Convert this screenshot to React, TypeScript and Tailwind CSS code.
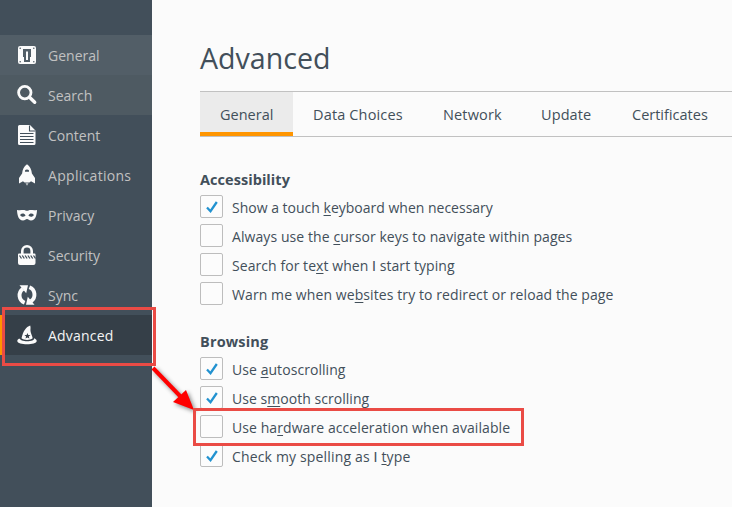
import { ReactNode } from "react";

const icons: Record<string, ReactNode> = {
  General: (
    <>
      <path fillRule="evenodd" d="M3 1h14a2 2 0 0 1 2 2v14a2 2 0 0 1-2 2H3a2 2 0 0 1-2-2V3a2 2 0 0 1 2-2ZM6 4v8h1v5h6v-5h1V4Z" />
      <path d="M9 6.500h2V15H9Z" />
      <g fill="#4f5c65">
        <circle cx="3.200" cy="3.200" r=".8" /><circle cx="16.800" cy="3.200" r=".8" />
        <circle cx="3.200" cy="16.800" r=".8" /><circle cx="16.800" cy="16.800" r=".8" />
      </g>
    </>
  ),
  Search: (
    <g fill="none" stroke="currentColor">
      <circle cx="7.800" cy="7.600" r="6.200" strokeWidth="2.800" />
      <path d="m12.500 12.300 5.200 5" strokeWidth="3.400" strokeLinecap="round" />
    </g>
  ),
  Content: (
    <>
      <path d="M2.500 0H13l5.500 5.500v13A1.500 1.500 0 0 1 17 20H2.500A1.500 1.500 0 0 1 1 18.500v-17A1.500 1.500 0 0 1 2.500 0Z" />
      <path d="M12.500.5V6h6M3 8.500h13.500M3 11.500h13.500M3 14.500h13.500M3 17.500h13.500" fill="none" stroke="#424f5a" strokeWidth="1.100" />
    </>
  ),
  Applications: (
    <>
      <path fillRule="evenodd" d="M10-.8C7 1.500 5.400 4.500 5.100 8.500L2 13v5.500l4-2.300c.7.600 1.400 1.300 2 1.300h4c.6 0 1.300-.7 2-1.300l4 2.300V13l-3.100-4.500C14.600 4.500 13 1.500 10-.8Zm0 5.300a2 2 0 0 1 2 2.300H8a2 2 0 0 1 2-2.300Z" />
      <path d="M8.500 18.300h3L10 20.800Z" opacity=".7" />
    </>
  ),
  Privacy: (
    <path fillRule="evenodd" d="M0 5c3.500.9 6-.5 8.500.4.800.4 2.200.4 3 0 2.500-.9 5 .5 8.500-.4-.2 5-1.500 10.500-6 10.500-2 0-2.700-1.500-4-1.500s-2 1.500-4 1.500C1.500 15.500.2 10 0 5Zm3 5c1.600 2.300 3.600 2.300 5.600.5C7 8 5 8 3 10Zm14 0c-2-2-4-2-5.600.5 2 1.800 4 1.800 5.600-.5Z" />
  ),
  Security: (
    <>
      <path d="M5.300 9V6a4.700 4.700 0 0 1 9.400 0v3" fill="none" stroke="currentColor" strokeWidth="2.600" />
      <path d="M2 8.500h15.500a1 1 0 0 1 1 1V18a2 2 0 0 1-2 2H3a2 2 0 0 1-2-2V9.500a1 1 0 0 1 1-1Z" />
      <path d="m2.500 10.500 2 3m.8-3 2 3m.8-3 2 3m.8-3 2 3m.8-3 2 3m.8-3 2 3" stroke="#424f5a" strokeWidth="1.300" />
    </>
  ),
  Sync: (
    <>
      <path d="M6 3.800A7.900 7.900 0 0 0 7.600 17.700M14 16.200A7.900 7.900 0 0 0 12.400 2.300" fill="none" stroke="currentColor" strokeWidth="3.900" />
      <path d="M2.500.3H11L9.200 8.200ZM17.500 19.700H9l1.800-7.900Z" />
    </>
  ),
  Advanced: (
    <>
      <path fillRule="evenodd" d="M13.200.5C9 2 6.300 5.800 4.500 13.300c2.800 2.300 8.200 2.300 11.200 0-.6-3-1.900-5-2.200-7.300-.2-2 .4-3.500-.3-5.500ZM10.400 8l.9 2 2.200.1-1.700 1.400.6 2.100-2-1.200-1.900 1.200.6-2.100-1.700-1.400 2.200-.1Z" />
      <path d="M3 13.300C1.300 14 .3 14.800.3 16c0 4.300 19.400 4.300 19.400 0 0-1.200-1-2-2.700-2.700 1.500 3.900-15 3.900-14 0Z" />
    </>
  ),
};

const nav = [
  ["General", "bg-[#525e67] pl-[17px] tracking-[0.02px]"],
  ["Search", "bg-[#4e5a62] pl-[17px]"],
  ["Content", "pl-[17px]"],
  ["Applications", "pl-[17px] tracking-[0.3px]"],
  ["Privacy", "pl-[17px]"],
  ["Security", "pl-[17px]"],
  ["Sync", "pl-[17px]"],
  ["Advanced", "bg-[#353f48] text-[#f4f4f4] border-l-2 border-[#ff9500] pl-[15px] tracking-[0.2px]"],
];

function Check({ on, children, className = "" }: { on?: boolean; children: ReactNode; className?: string }) {
  return (
    <label className="flex h-[29px] items-center gap-[9px]">
      <span className="flex size-[23px] shrink-0 items-center justify-center rounded-[2px] border border-[#bdbdbd] bg-[#fcfcfc]">
        {on && (
          <svg viewBox="0 0 12 12" className="size-3" fill="none" stroke="#2292d0" strokeWidth="2.300">
            <path d="m1 6.500 3.500 3.700L10.800 1" />
          </svg>
        )}
      </span>
      <span className={"whitespace-nowrap pt-[2px] " + className}>{children}</span>
    </label>
  );
}

const U = ({ children }: { children: ReactNode }) => <span className="underline decoration-1 underline-offset-2">{children}</span>;

const PlainI = () => <span className="font-['Lato',sans-serif]">I</span>;

export default function App() {
  return (
    <div className="relative flex h-[507px] w-[732px] overflow-hidden bg-[#fbfbfb] font-['Open_Sans',sans-serif] text-[14px] leading-5 text-[#424f5a]">
      <nav className="w-[152px] shrink-0 bg-[#424f5a] pt-[35px] text-[#c1c1c1]">
        {nav.map(([name, cls]) => (
          <div key={name} className={"flex h-10 items-center gap-[11px] " + cls}>
            <svg viewBox="0 0 20 20" className="size-5 shrink-0 overflow-visible text-[#fbfbfb]" fill="currentColor">{icons[name]}</svg>
            <span className="pt-px">{name}</span>
          </div>
        ))}
      </nav>
      <main className="min-w-0 flex-1 overflow-hidden pl-12 pt-[38px]">
        <h1 className="h-[53px] text-[28.6px] leading-10"><span>Advanced</span></h1>
        <div className="flex h-[46px] whitespace-nowrap border-y border-[#c1c1c1] text-[14.5px] leading-[45px]">
          <div className="w-[93px] border-b-4 border-[#ff9500] bg-[#ebebeb] pl-5"><span>General</span></div>
          <div className="w-[130px] pl-5 tracking-[0.15px]"><span>Data Choices</span></div>
          <div className="w-[98px] pl-5 tracking-[0.15px]"><span>Network</span></div>
          <div className="w-[90px] pl-5 tracking-[0.1px]"><span>Update</span></div>
          <div className="w-[121px] pl-[21px]"><span>Certificates</span></div>
        </div>
        <section className="pt-8">
          <h2 className="h-[23px] text-[14.5px] font-bold leading-[22px] tracking-[0.05px]"><span>Accessibility</span></h2>
          <Check on>Show a touch <U>k</U>eyboard when necessary</Check>
          <Check className="tracking-[0.08px]">Always use the <U>c</U>ursor keys to navigate within pages</Check>
          <Check className="tracking-[0.06px]">Search for te<U>x</U>t when <PlainI /> start typing</Check>
          <Check className="tracking-[0.09px]">Warn me when we<U>b</U>sites try to redirect or reload the page</Check>
        </section>
        <section className="pt-[23px]">
          <h2 className="h-[23px] text-[14.5px] font-bold leading-[22px] tracking-[0.15px]"><span>Browsing</span></h2>
          <Check on className="tracking-[0.06px]">Use <U>a</U>utoscrolling</Check>
          <Check on className="tracking-[0.04px]">Use s<U>m</U>ooth scrolling</Check>
          <Check className="tracking-[0.08px]">Use ha<U>r</U>dware acceleration when available</Check>
          <Check on className="tracking-[0.16px]">Check my spelling as <PlainI /> <U>t</U>ype</Check>
        </section>
      </main>
      <div className="absolute left-[2px] top-[307px] h-[59px] w-[154px] border-[3px] border-[#ea4b45]" />
      <svg className="absolute left-[145px] top-[360px] h-[60px] w-[60px] drop-shadow-[2px_2px_2px_rgba(0,0,0,0.45)]" viewBox="0 0 60 60">
        <path d="M8 8 36 37" stroke="#f00" strokeWidth="4" />
        <path d="M49 50 28 42 41 30Z" fill="#f00" />
      </svg>
      <div className="absolute left-[193px] top-[408px] h-[38px] w-[331px] border-[3px] border-[#ea4b45]" />
    </div>
  );
}
